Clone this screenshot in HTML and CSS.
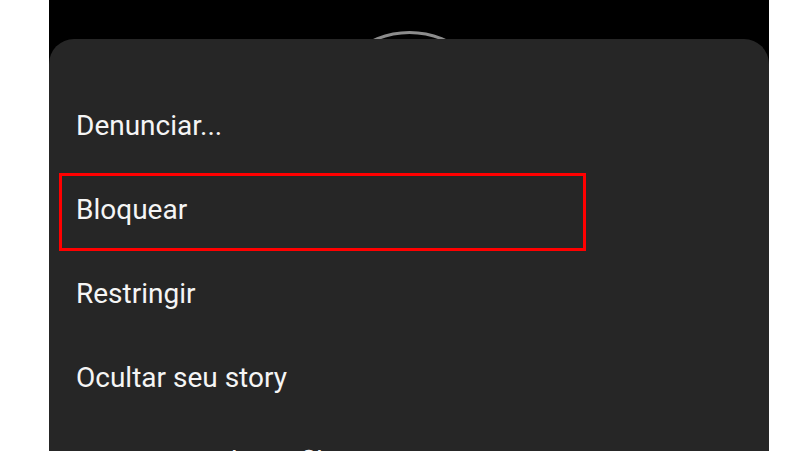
FILE: index.html
```html
<!DOCTYPE html>
<html lang="pt-BR">

<head>
    <meta charset="UTF-8" />
    <title>Opções</title>
    <link rel="stylesheet" href="styles.css">
</head>

<body>
    <div class="screen">
        <div class="story-ring"></div>
        <div class="sheet">
            <div class="handle"></div>
            <ul class="menu">
                <li class="menu-item">Denunciar...</li>
                <li class="menu-item marked">Bloquear</li>
                <li class="menu-item">Restringir</li>
                <li class="menu-item">Ocultar seu story</li>
                <li class="menu-item">Copiar URL do perfil</li>
            </ul>
        </div>
    </div>
</body>

</html>
```

FILE: styles.css
```css
:root {
    --page: #ffffff;
    --screen: #000000;
    --sheet: #262626;
    --handle: #a6a6a6;
    --ring: #8c8c8c;
    --text-color: #f5f5f5;
    --mark: #ff0000;
}

html,
body {
    margin: 0;
    height: 100%;
    overflow: hidden;
}

body {
    background: var(--page);
    font-family: Roboto, 'Noto Sans', sans-serif;
}

.screen {
    position: relative;
    width: 720px;
    height: 451px;
    margin-left: 49px;
    background: var(--screen);
    padding-top: 39px;
    box-sizing: border-box;
    overflow: hidden;
}

.story-ring {
    position: absolute;
    left: 272px;
    top: 31px;
    width: 171px;
    height: 171px;
    border: 3px solid var(--ring);
    border-radius: 50%;
}

.sheet {
    position: relative;
    background: var(--sheet);
    border-radius: 25px 25px 0 0;
    height: 100%;
    display: flex;
    flex-direction: column;
    align-items: stretch;
}

.handle {
    align-self: center;
    width: 64px;
    height: 7px;
    margin-top: 21px;
    margin-bottom: 24px;
    border-radius: 4px;
    background: var(--handle);
}

.menu {
    list-style: none;
    margin: 0;
    padding: 0;
}

.menu-item {
    position: relative;
    height: 84px;
    line-height: 84px;
    padding-left: 27px;
    font-size: 28px;
    color: var(--text-color);
}

.menu-item.marked::after {
    content: "";
    position: absolute;
    left: 10px;
    top: 5px;
    width: 527px;
    height: 78px;
    box-sizing: border-box;
    border: 3px solid var(--mark);
}
```
